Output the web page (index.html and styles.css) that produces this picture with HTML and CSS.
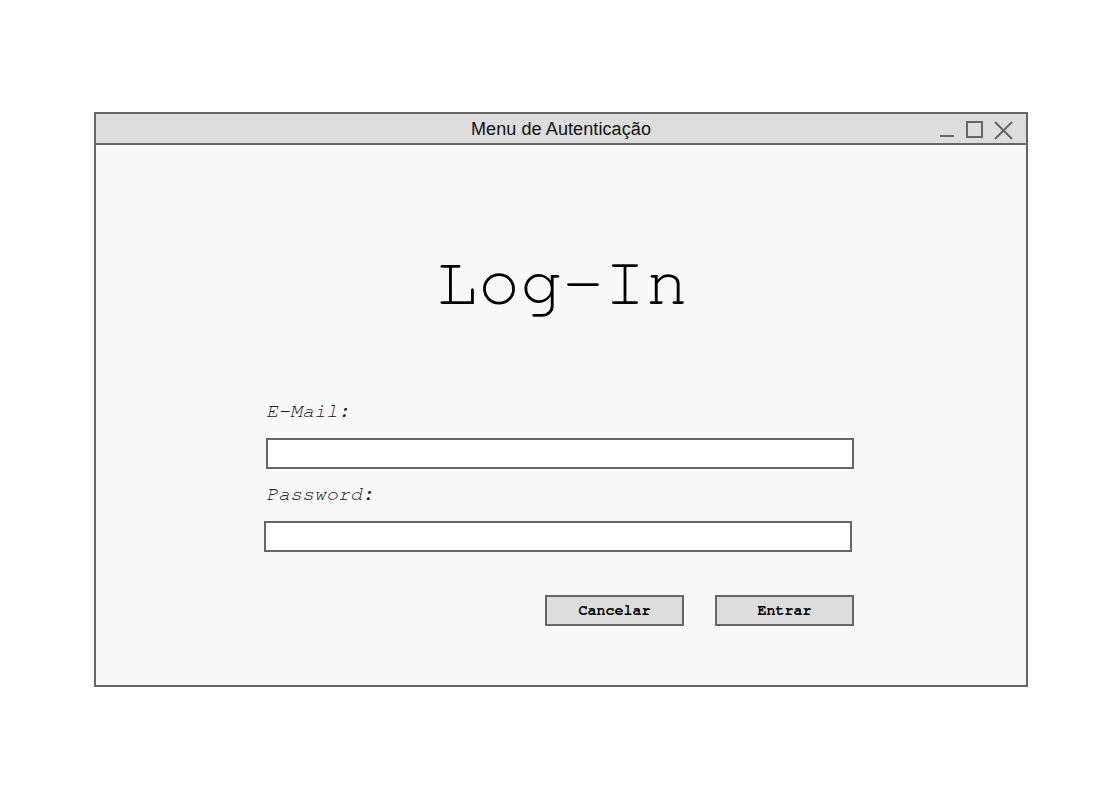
FILE: index.html
```html
<!DOCTYPE html>
<html>
<head>
<meta charset="utf-8">
<title>Menu de Autenticação</title>
<link rel="stylesheet" href="styles.css">
</head>
<body>
<div class="window">
  <div class="titlebar">
    <span class="title">Menu de Autenticação</span>
    <div class="controls">
      <svg class="ctl" width="16" height="18" viewBox="0 0 16 18"><path d="M1 15 H15" stroke="#666" stroke-width="2" fill="none"/></svg>
      <svg class="ctl" width="17" height="18" viewBox="0 0 17 18"><rect x="1" y="1" width="15" height="15" stroke="#666" stroke-width="2" fill="none"/></svg>
      <svg class="ctl" width="19" height="19" viewBox="0 0 19 19"><path d="M1 1 L18 18 M18 1 L1 18" stroke="#666" stroke-width="2" fill="none"/></svg>
    </div>
  </div>
  <div class="content">
    <h1 class="heading">Log-In</h1>
    <div class="form">
      <label class="label">E-Mail:</label>
      <div class="field"></div>
      <label class="label">Password:</label>
      <div class="field field-shift"></div>
      <div class="actions">
        <button class="btn">Cancelar</button>
        <button class="btn">Entrar</button>
      </div>
    </div>
  </div>
</div>
</body>
</html>
```
FILE: styles.css
```css
html, body {
  margin: 0;
  padding: 0;
  background: #ffffff;
}
body {
  padding: 112px 0 0 94px;
}
.window {
  width: 930px;
  border: 2px solid #666666;
  background: #f9f9f9;
}
.titlebar {
  position: relative;
  height: 29px;
  background: #dddddd;
  border-bottom: 2px solid #666666;
  display: flex;
  align-items: center;
  justify-content: center;
}
.title {
  font-family: "Liberation Sans", Arial, sans-serif;
  font-size: 18px;
  letter-spacing: 0.1px;
  color: #111;
  padding-top: 2px;
}
.controls {
  position: absolute;
  right: 13px;
  top: 7px;
  display: flex;
  gap: 11px;
}
.ctl {
  display: block;
}
.content {
  height: 540px;
  display: flex;
  flex-direction: column;
  align-items: center;
}
.heading {
  margin: 98px 0 0 0;
  font-family: "Nimbus Mono PS", "Nimbus Mono L", "FreeMono", "Liberation Mono", "Courier New", monospace;
  font-weight: normal;
  font-size: 70px;
  line-height: 80px;
  color: #000;
  padding-left: 2px;
}
.form {
  width: 588px;
  margin-top: 79px;
  margin-right: 2px;
  display: flex;
  flex-direction: column;
}
.label {
  font-family: "Nimbus Mono PS", "Nimbus Mono L", "FreeMono", "Liberation Mono", "Courier New", monospace;
  font-style: italic;
  font-size: 20px;
  line-height: 18px;
  color: #1a1a1a;
  height: 26px;
}
.field {
  height: 27px;
  border: 2px solid #666666;
  background: #ffffff;
  margin-top: 10px;
  margin-bottom: 16px;
}
.field-shift {
  margin-left: -2px;
  margin-right: 2px;
}
.actions {
  display: flex;
  justify-content: flex-end;
  gap: 31px;
  margin-top: 27px;
}
.btn {
  width: 139px;
  height: 31px;
  border: 2px solid #666666;
  background: #dddddd;
  font-family: "Nimbus Mono PS", "Nimbus Mono L", "FreeMono", "Liberation Mono", "Courier New", monospace;
  font-weight: bold;
  font-size: 15px;
  color: #000;
  padding: 0;
  border-radius: 0;
}
```
